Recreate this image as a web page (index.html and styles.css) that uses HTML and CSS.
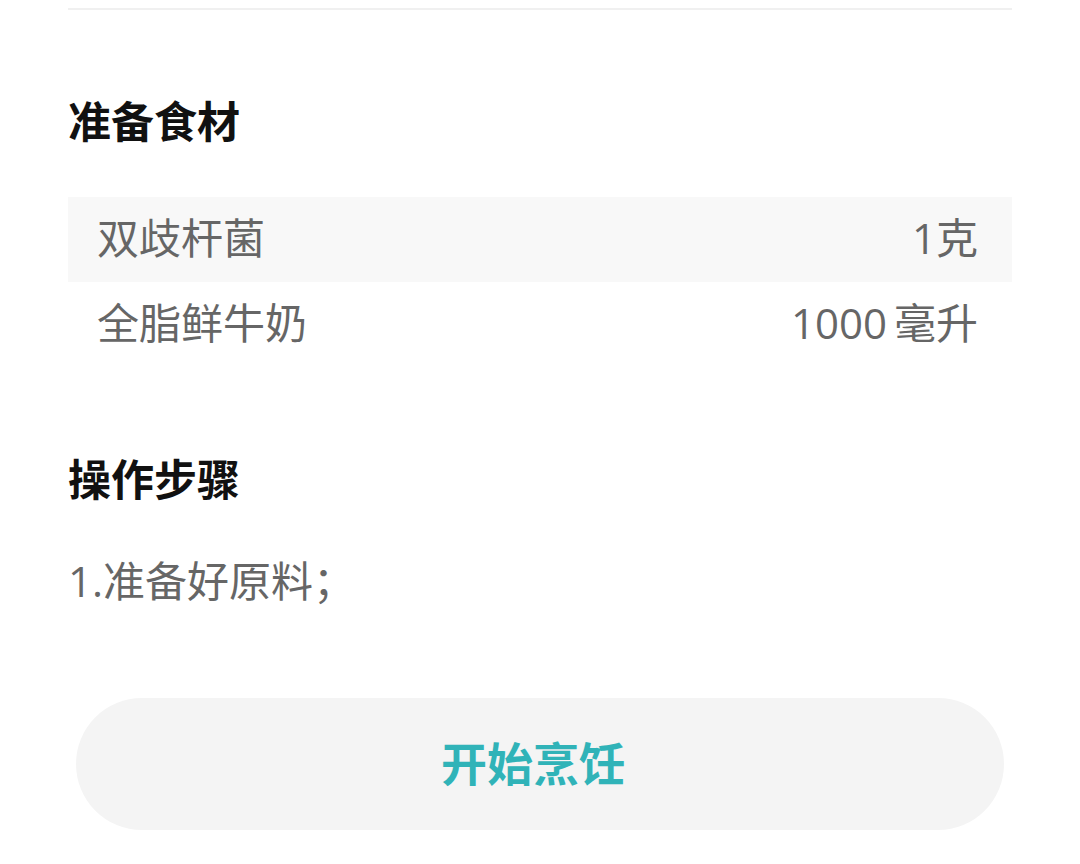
FILE: index.html
```html
<!DOCTYPE html>
<html lang="zh-CN">
<head>
<meta charset="utf-8">
<link rel="stylesheet" href="styles.css">
</head>
<body>
<div class="page">
  <div class="divider"></div>
  <h2 class="section-title first">准备食材</h2>
  <div class="ingredients">
    <div class="row shaded"><span class="name">双歧杆菌</span><span class="amount">1克</span></div>
    <div class="row"><span class="name">全脂鲜牛奶</span><span class="amount">1000 毫升</span></div>
  </div>
  <h2 class="section-title second">操作步骤</h2>
  <p class="step">1.准备好原料；</p>
  <button class="start-btn">开始烹饪</button>
</div>
</body>
</html>
```
FILE: styles.css
```css
html, body {
  margin: 0;
  padding: 0;
  background: #ffffff;
}
body {
  font-family: "Open Sans", "Noto Sans CJK SC", sans-serif;
}
.page {
  width: 944px;
  margin: 0 68px;
  display: flex;
  flex-direction: column;
}
.divider {
  margin-top: 8px;
  height: 2px;
  background: #f0f0f0;
}
.section-title {
  margin: 0;
  font-family: "Noto Sans CJK SC", sans-serif;
  font-size: 43px;
  line-height: 60px;
  font-weight: 700;
  color: #111111;
}
.section-title.first {
  margin-top: 79px;
}
.ingredients {
  margin-top: 48px;
  display: flex;
  flex-direction: column;
}
.row {
  height: 85px;
  box-sizing: border-box;
  display: flex;
  align-items: center;
  justify-content: space-between;
  padding: 0 34px 8px 29px;
  font-size: 42px;
  color: #666666;
}
.amount {
  word-spacing: -4px;
}
.row.shaded {
  background: #f8f8f8;
}
.section-title.second {
  margin-top: 80px;
}
.step {
  margin: 44px 0 0 0;
  font-size: 42px;
  line-height: 60px;
  color: #666666;
}
.start-btn {
  margin: 87px 8px 0 8px;
  height: 132px;
  padding: 0 14px 6px 0;
  border: none;
  border-radius: 66px;
  background: #f4f4f4;
  font-family: "Noto Sans CJK SC", sans-serif;
  font-size: 46px;
  font-weight: 700;
  color: #30b3b8;
}
```
